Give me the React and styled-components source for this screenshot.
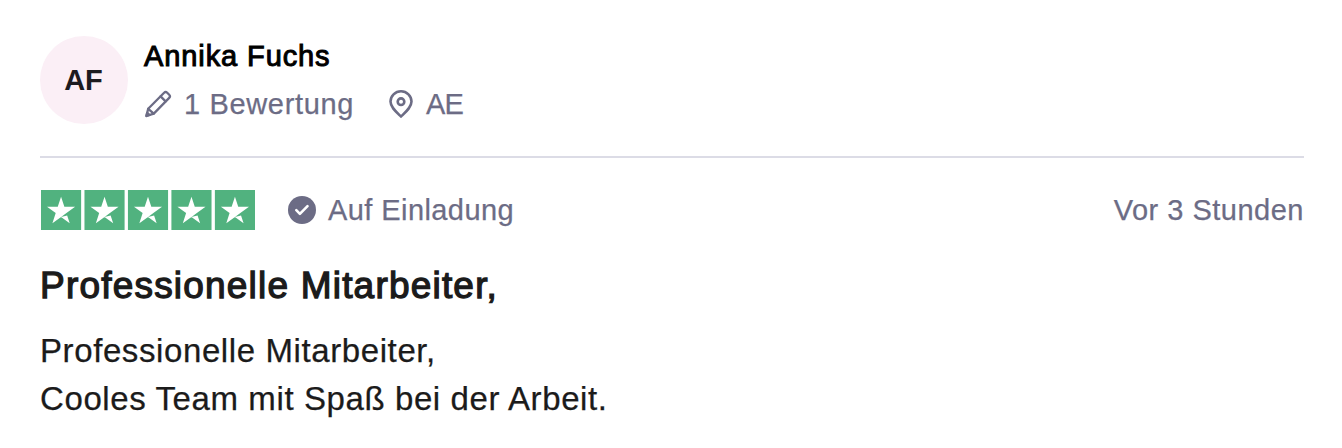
import React from "react";
import styled, { createGlobalStyle } from "styled-components";

const GlobalStyle = createGlobalStyle`
  * { box-sizing: border-box; }
  body {
    margin: 0;
    background: #fff;
    font-family: "Liberation Sans", Arial, sans-serif;
  }
`;

const Card = styled.article`
  height: 448px;
  padding: 36px 38px 0 40px;
  color: #1b1b1b;
`;

const Header = styled.header`
  display: flex;
  gap: 16px;
  height: 122px;
  border-bottom: 2px solid #dcdce6;
`;

const Avatar = styled.div`
  display: flex;
  align-items: center;
  justify-content: center;
  width: 88px;
  height: 88px;
  padding-right: 1px;
  border-radius: 50%;
  background: #fbeff6;
  color: #1c1b1f;
  font-size: 29px;
  font-weight: 700;
`;

const Name = styled.div`
  height: 42px;
  color: #000;
  font-size: 29px;
  line-height: 40px;
  letter-spacing: 0.9px;
  -webkit-text-stroke: 1px currentColor;
`;

const Details = styled.div`
  display: flex;
  gap: 33px;
  padding-top: 6px;
`;

const Meta = styled.span`
  display: flex;
  align-items: center;
  gap: ${(p) => p.$gap ?? 12}px;
  height: 40px;
  color: #6c6c85;
  font-size: 29px;
  line-height: 40px;
  letter-spacing: ${(p) => p.$spacing ?? 0.5}px;
  -webkit-text-stroke: 0.25px currentColor;
  white-space: nowrap;
`;

const Icon = styled.svg`
  display: block;
  flex: none;
  width: 28px;
  height: 28px;
  fill: none;
  stroke: currentColor;
  stroke-width: ${(p) => p.$stroke ?? 2.6};
  stroke-linejoin: round;
  stroke-linecap: round;
`;

const RatingRow = styled.div`
  display: flex;
  align-items: center;
  height: 40px;
  margin-top: 32px;
`;

const Stars = styled.svg`
  display: block;
  width: 214px;
  height: 40px;
  margin: 0 33px 0 1px;
`;

const Time = styled(Meta)`
  margin-left: auto;
`;

const Title = styled.h2`
  margin: 32px 0 0;
  font-size: 37px;
  font-weight: 400;
  line-height: 48px;
  letter-spacing: 1.2px;
  -webkit-text-stroke: 1.3px currentColor;
`;

const Body = styled.p`
  margin: 17px 0 0;
  font-size: 33px;
  line-height: 48px;
  letter-spacing: 0.6px;
  -webkit-text-stroke: 0.25px currentColor;
`;

const tiles = [0, 1, 2, 3, 4];

export default function App() {
  return (
    <>
      <GlobalStyle />
      <Card>
        <Header>
          <Avatar>AF</Avatar>
          <div>
            <Name>Annika Fuchs</Name>
            <Details>
              <Meta $spacing={0.65}>
                <Icon viewBox="0 0 28 28" $stroke={2.3}>
                  <path d="M20.1 2.8a2.2 2.2 0 0 1 3.1 0l2 2a2.2 2.2 0 0 1 0 3.1L9.8 23.6 2.4 26l1.8-7.2z" />
                  <path d="M16.6 6.4l5 5M4.2 18.8l5.6 4.8" />
                  <path d="M2.4 26l.8-3.2 2.4 2.2z" />
                </Icon>
                1 Bewertung
              </Meta>
              <Meta $spacing={-0.8} $gap={11}>
                <Icon viewBox="0 0 28 28">
                  <path d="M14 26.6C9.2 22 3.5 17.3 3.5 11.6a10.5 10.3 0 0 1 21 0c0 5.7-5.7 10.4-10.5 15z" />
                  <circle cx="14" cy="11.7" r="3.3" />
                </Icon>
                AE
              </Meta>
            </Details>
          </div>
        </Header>
        <RatingRow>
          <Stars viewBox="0 0 512 96" preserveAspectRatio="none">
            {tiles.map((n) => (
              <g key={n} transform={`translate(${n * 104} 0)`}>
                <path fill="#51b27f" d="M0 0h96v96H0z" />
                <path
                  fill="#fff"
                  d="M48 64.7L62.6 61l6.1 18.8zm33.6-24.3H55.9L48 16.2l-7.9 24.2H14.4l20.8 15-7.9 24.2 20.8-15 12.8-9.2z"
                />
              </g>
            ))}
          </Stars>
          <Meta $spacing={0.42}>
            <Icon viewBox="0 0 28 28">
              <circle cx="14" cy="14" r="14" fill="currentColor" stroke="none" />
              <path d="M8.3 14.2l3.6 3.6 7.6-7.6" stroke="#fff" />
            </Icon>
            Auf Einladung
          </Meta>
          <Time>Vor 3 Stunden</Time>
        </RatingRow>
        <Title>Professionelle Mitarbeiter,</Title>
        <Body>
          Professionelle Mitarbeiter,
          <br />
          Cooles Team mit Spaß bei der Arbeit.
        </Body>
      </Card>
    </>
  );
}
